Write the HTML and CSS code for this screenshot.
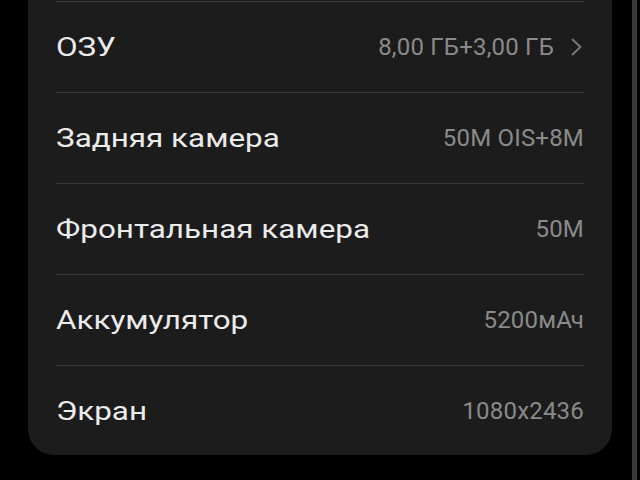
FILE: index.html
```html
<!DOCTYPE html>
<html lang="ru">
<head>
<meta charset="utf-8">
<link rel="stylesheet" href="styles.css">
</head>
<body>
<div class="screen">
  <div class="card">
    <div class="rule"></div>
    <div class="row">
      <span class="label">ОЗУ</span>
      <span class="value">8,00 ГБ+3,00 ГБ
        <svg class="chev" width="12" height="20" viewBox="0 0 12 20"><path d="M1.5 2.5 L9.5 10 L1.5 17.5" fill="none" stroke="#7a7a7a" stroke-width="1.8" stroke-linecap="round" stroke-linejoin="round"/></svg>
      </span>
    </div>
    <div class="rule"></div>
    <div class="row">
      <span class="label">Задняя камера</span>
      <span class="value">50M OIS+8M</span>
    </div>
    <div class="rule"></div>
    <div class="row">
      <span class="label">Фронтальная камера</span>
      <span class="value">50M</span>
    </div>
    <div class="rule"></div>
    <div class="row">
      <span class="label">Аккумулятор</span>
      <span class="value">5200мАч</span>
    </div>
    <div class="rule"></div>
    <div class="row">
      <span class="label">Экран</span>
      <span class="value">1080x2436</span>
    </div>
  </div>
  <div class="scrollbar"></div>
</div>
</body>
</html>
```
FILE: styles.css
```css
html, body {
  margin: 0;
  padding: 0;
  background: #000;
}
.screen {
  width: 640px;
  height: 480px;
  display: flex;
  align-items: flex-start;
  font-family: Roboto, "Noto Sans", sans-serif;
}
.card {
  margin-left: 28px;
  width: 584px;
  background: #1c1c1c;
  border-radius: 0 0 26px 26px;
  padding: 1px 28px 0;
  box-sizing: border-box;
  height: 455px;
}
.rule {
  height: 1px;
  background: #363636;
}
.row {
  height: 90px;
  display: flex;
  align-items: center;
  justify-content: space-between;
}
.label {
  color: #ebebeb;
  font-size: 26px;
  display: inline-block;
  transform: scaleX(1.208);
  transform-origin: left center;
}
.value {
  color: #8a8a8a;
  font-size: 24px;
  letter-spacing: 0.2px;
  display: flex;
  align-items: center;
  gap: 17px;
}
.chev {
  display: block;
  margin-right: 1px;
}
.scrollbar {
  margin-left: 20px;
  width: 5px;
  height: 480px;
  background: #3a3a3a;
}
```
